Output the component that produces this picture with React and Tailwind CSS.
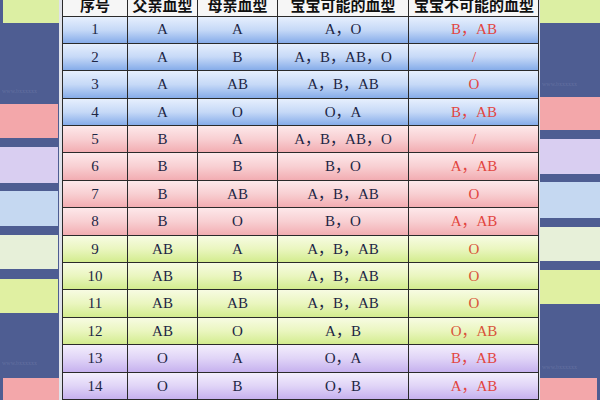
const rows = [
  ["1", "A", "A", "A，O", "B，AB"],
  ["2", "A", "B", "A，B，AB，O", "/"],
  ["3", "A", "AB", "A，B，AB", "O"],
  ["4", "A", "O", "O，A", "B，AB"],
  ["5", "B", "A", "A，B，AB，O", "/"],
  ["6", "B", "B", "B，O", "A，AB"],
  ["7", "B", "AB", "A，B，AB", "O"],
  ["8", "B", "O", "B，O", "A，AB"],
  ["9", "AB", "A", "A，B，AB", "O"],
  ["10", "AB", "B", "A，B，AB", "O"],
  ["11", "AB", "AB", "A，B，AB", "O"],
  ["12", "AB", "O", "A，B", "O，AB"],
  ["13", "O", "A", "O，A", "B，AB"],
  ["14", "O", "B", "O，B", "A，AB"],
];

const rowBg = (i) => {
  if (i < 4) return "bg-linear-to-b from-[#e6effd] via-[#c6d9f7] to-[#86ace9]";
  if (i < 8) return "bg-linear-to-b from-[#fde8ea] via-[#f8cfd2] to-[#f2adb2]";
  if (i < 12) return "bg-linear-to-b from-[#f7fbe2] via-[#eaf6bf] to-[#d3ec8e]";
  return "bg-linear-to-b from-[#f3eefc] via-[#e0d4f7] to-[#c6b1ee]";
};

const redText = (i) => (i >= 8 && i < 12 ? "text-[#d8533a]" : "text-[#e2453f]");

const font = { fontFamily: '"Liberation Serif", "Noto Sans CJK SC", serif' };

const Watermark = () => (
  <div className="text-[6px] leading-none text-[#6c78a6] pl-[2px] opacity-70">www.bxxxxxx</div>
);

const LeftSide = () => (
  <div className="w-[59px] shrink-0 bg-[#4e5d92] flex flex-col">
    <div className="ml-[3px] h-[23px] bg-[#dcefa3]" />
    <div className="h-[81px] flex flex-col justify-end pb-[10px]">
      <Watermark />
    </div>
    <div className="h-[34px] mr-[1px] bg-[#f3a7aa]" />
    <div className="h-[9px]" />
    <div className="h-[36px] mr-[1px] bg-[#d9cef1]" />
    <div className="h-[8px]" />
    <div className="h-[35px] mr-[1px] bg-[#c5d8f1]" />
    <div className="h-[9px]" />
    <div className="h-[34px] mr-[1px] bg-[#e7f0d9]" />
    <div className="h-[10px]" />
    <div className="h-[34px] mr-[1px] bg-[#e0f0a2]" />
    <div className="h-[65px] flex flex-col justify-end pb-[12px]">
      <Watermark />
    </div>
    <div className="ml-[3px] h-[22px] bg-[#f3a7aa]" />
  </div>
);

const RightSide = () => (
  <div className="w-[60px] shrink-0 bg-[#4e5d92] flex flex-col">
    <div className="h-[23px] bg-[#dcefa3]" />
    <div className="h-[74px] flex flex-col justify-end pb-[10px]">
      <Watermark />
    </div>
    <div className="h-[34px] bg-[#f3a7aa]" />
    <div className="h-[9px]" />
    <div className="h-[35px] bg-[#d9cef1]" />
    <div className="h-[8px]" />
    <div className="h-[36px] bg-[#c5d8f1]" />
    <div className="h-[9px]" />
    <div className="h-[34px] bg-[#e7f0d9]" />
    <div className="h-[9px]" />
    <div className="h-[35px] bg-[#e0f0a2]" />
    <div className="h-[74px] flex flex-col justify-end pb-[8px]">
      <Watermark />
    </div>
    <div className="mr-[3px] h-[22px] bg-[#f3a7aa]" />
  </div>
);

const cols = "grid grid-cols-[65px_70px_80px_131px_130px]";

export default function App() {
  return (
    <div className="w-[600px] h-[400px] overflow-hidden flex bg-[#4e5d92]" style={font}>
      <LeftSide />
      <div className="w-[3px] shrink-0 bg-[#dfe2ea]" />
      <div className="w-[476px] shrink-0 bg-[#f6f6f6] flex flex-col border-l border-[#2a2a2a]">
        <div className={`${cols} h-[24px] bg-[#f6f6f6] border-b border-[#2a2a2a]`}>
          {["序号", "父亲血型", "母亲血型", "宝宝可能的血型", "宝宝不可能的血型"].map((h, i) => (
            <div
              key={h}
              className={`flex items-start justify-center text-[15px] font-bold text-[#111] leading-[18px] ${i < 4 ? "border-r border-[#2a2a2a]" : ""}`}
            >
              <span className="-mt-[3px]">{h}</span>
            </div>
          ))}
        </div>
        {rows.map((r, i) => (
          <div key={r[0]} className={`${cols} h-[27.4px] shrink-0 border-b border-[#2a2a2a] ${rowBg(i)}`}>
            {r.map((c, j) => (
              <div
                key={j}
                className={`flex items-center justify-center text-[15px] ${j < 4 ? "border-r border-[#2a2a2a]" : ""} ${j === 4 ? redText(i) : "text-[#1d2645]"}`}
              >
                {c}
              </div>
            ))}
          </div>
        ))}
      </div>
      <div className="w-[2px] shrink-0 bg-[#dfe2ea] border-l border-[#2a2a2a]" />
      <RightSide />
    </div>
  );
}
